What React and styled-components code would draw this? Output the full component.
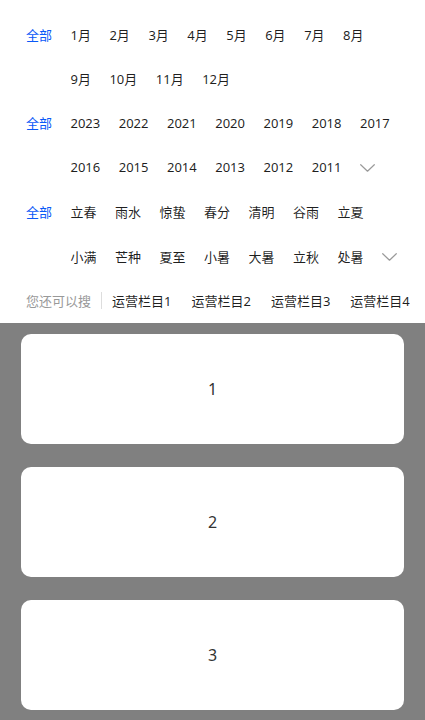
import React from "react";
import styled, { createGlobalStyle } from "styled-components";

const Global = createGlobalStyle`
  html, body { margin: 0; padding: 0; background: #ffffff; }
  body { font-family: "Noto Sans", "Noto Sans CJK SC", sans-serif; }
  * { box-sizing: border-box; }
`;

const Page = styled.div`
  min-height: 100vh;
  display: flex;
  flex-direction: column;
`;

const Header = styled.div`
  background: #ffffff;
  padding: 12px 0 0 26px;
`;

const Line = styled.div`
  height: 44.4px;
  display: flex;
  align-items: center;
  column-gap: 18.5px;
  font-size: 13px;
  white-space: nowrap;
`;

const Label = styled.span`
  width: 26px;
  flex: none;
  color: #0a59f7;
`;

const Item = styled.span`
  flex: none;
  color: rgba(0, 0, 0, 0.88);
`;

const More = styled.svg`
  flex: none;
  width: 15px;
  height: 8px;
  margin-top: 1px;
`;

const SearchLine = styled.div`
  height: 44.4px;
  display: flex;
  align-items: center;
  font-size: 13px;
  white-space: nowrap;
  overflow: hidden;
`;

const Hint = styled.span`
  color: #999999;
  flex: none;
`;

const Divider = styled.span`
  flex: none;
  width: 1px;
  height: 17px;
  background: #dddddd;
  margin: 0 0 0 10px;
`;

const Column = styled.span`
  flex: none;
  padding: 0 10px;
  color: rgba(0, 0, 0, 0.88);
`;

const Feed = styled.div`
  flex: 1;
  background: #808080;
  padding: 11px 21px 10px;
  display: flex;
  flex-direction: column;
  gap: 23px;
`;

const Card = styled.div`
  height: 110px;
  background: #ffffff;
  border-radius: 10px;
  display: flex;
  align-items: center;
  justify-content: center;
  font-size: 16px;
  color: #333333;
`;

const Chevron = () => (
  <More viewBox="0 0 15 8">
    <polyline
      points="0.7,0.7 7.5,7.2 14.3,0.7"
      fill="none"
      stroke="#9a9a9a"
      strokeWidth="1.2"
      strokeLinejoin="round"
      strokeLinecap="round"
    />
  </More>
);

const groups = [
  {
    lines: [
      ["1月", "2月", "3月", "4月", "5月", "6月", "7月", "8月"],
      ["9月", "10月", "11月", "12月"],
    ],
    more: false,
  },
  {
    lines: [
      ["2023", "2022", "2021", "2020", "2019", "2018", "2017"],
      ["2016", "2015", "2014", "2013", "2012", "2011"],
    ],
    more: true,
  },
  {
    lines: [
      ["立春", "雨水", "惊蛰", "春分", "清明", "谷雨", "立夏"],
      ["小满", "芒种", "夏至", "小暑", "大暑", "立秋", "处暑"],
    ],
    more: true,
  },
];

const columns = ["运营栏目1", "运营栏目2", "运营栏目3", "运营栏目4"];

export default function App() {
  return (
    <Page>
      <Global />
      <Header>
        {groups.map((g, gi) =>
          g.lines.map((line, li) => (
            <Line key={`${gi}-${li}`}>
              <Label>{li === 0 ? "全部" : ""}</Label>
              {line.map((t) => (
                <Item key={t}>{t}</Item>
              ))}
              {g.more && li === g.lines.length - 1 && <Chevron />}
            </Line>
          ))
        )}
        <SearchLine>
          <Hint>您还可以搜</Hint>
          <Divider />
          {columns.map((c) => (
            <Column key={c}>{c}</Column>
          ))}
        </SearchLine>
      </Header>
      <Feed>
        {[1, 2, 3].map((n) => (
          <Card key={n}>{n}</Card>
        ))}
      </Feed>
    </Page>
  );
}
